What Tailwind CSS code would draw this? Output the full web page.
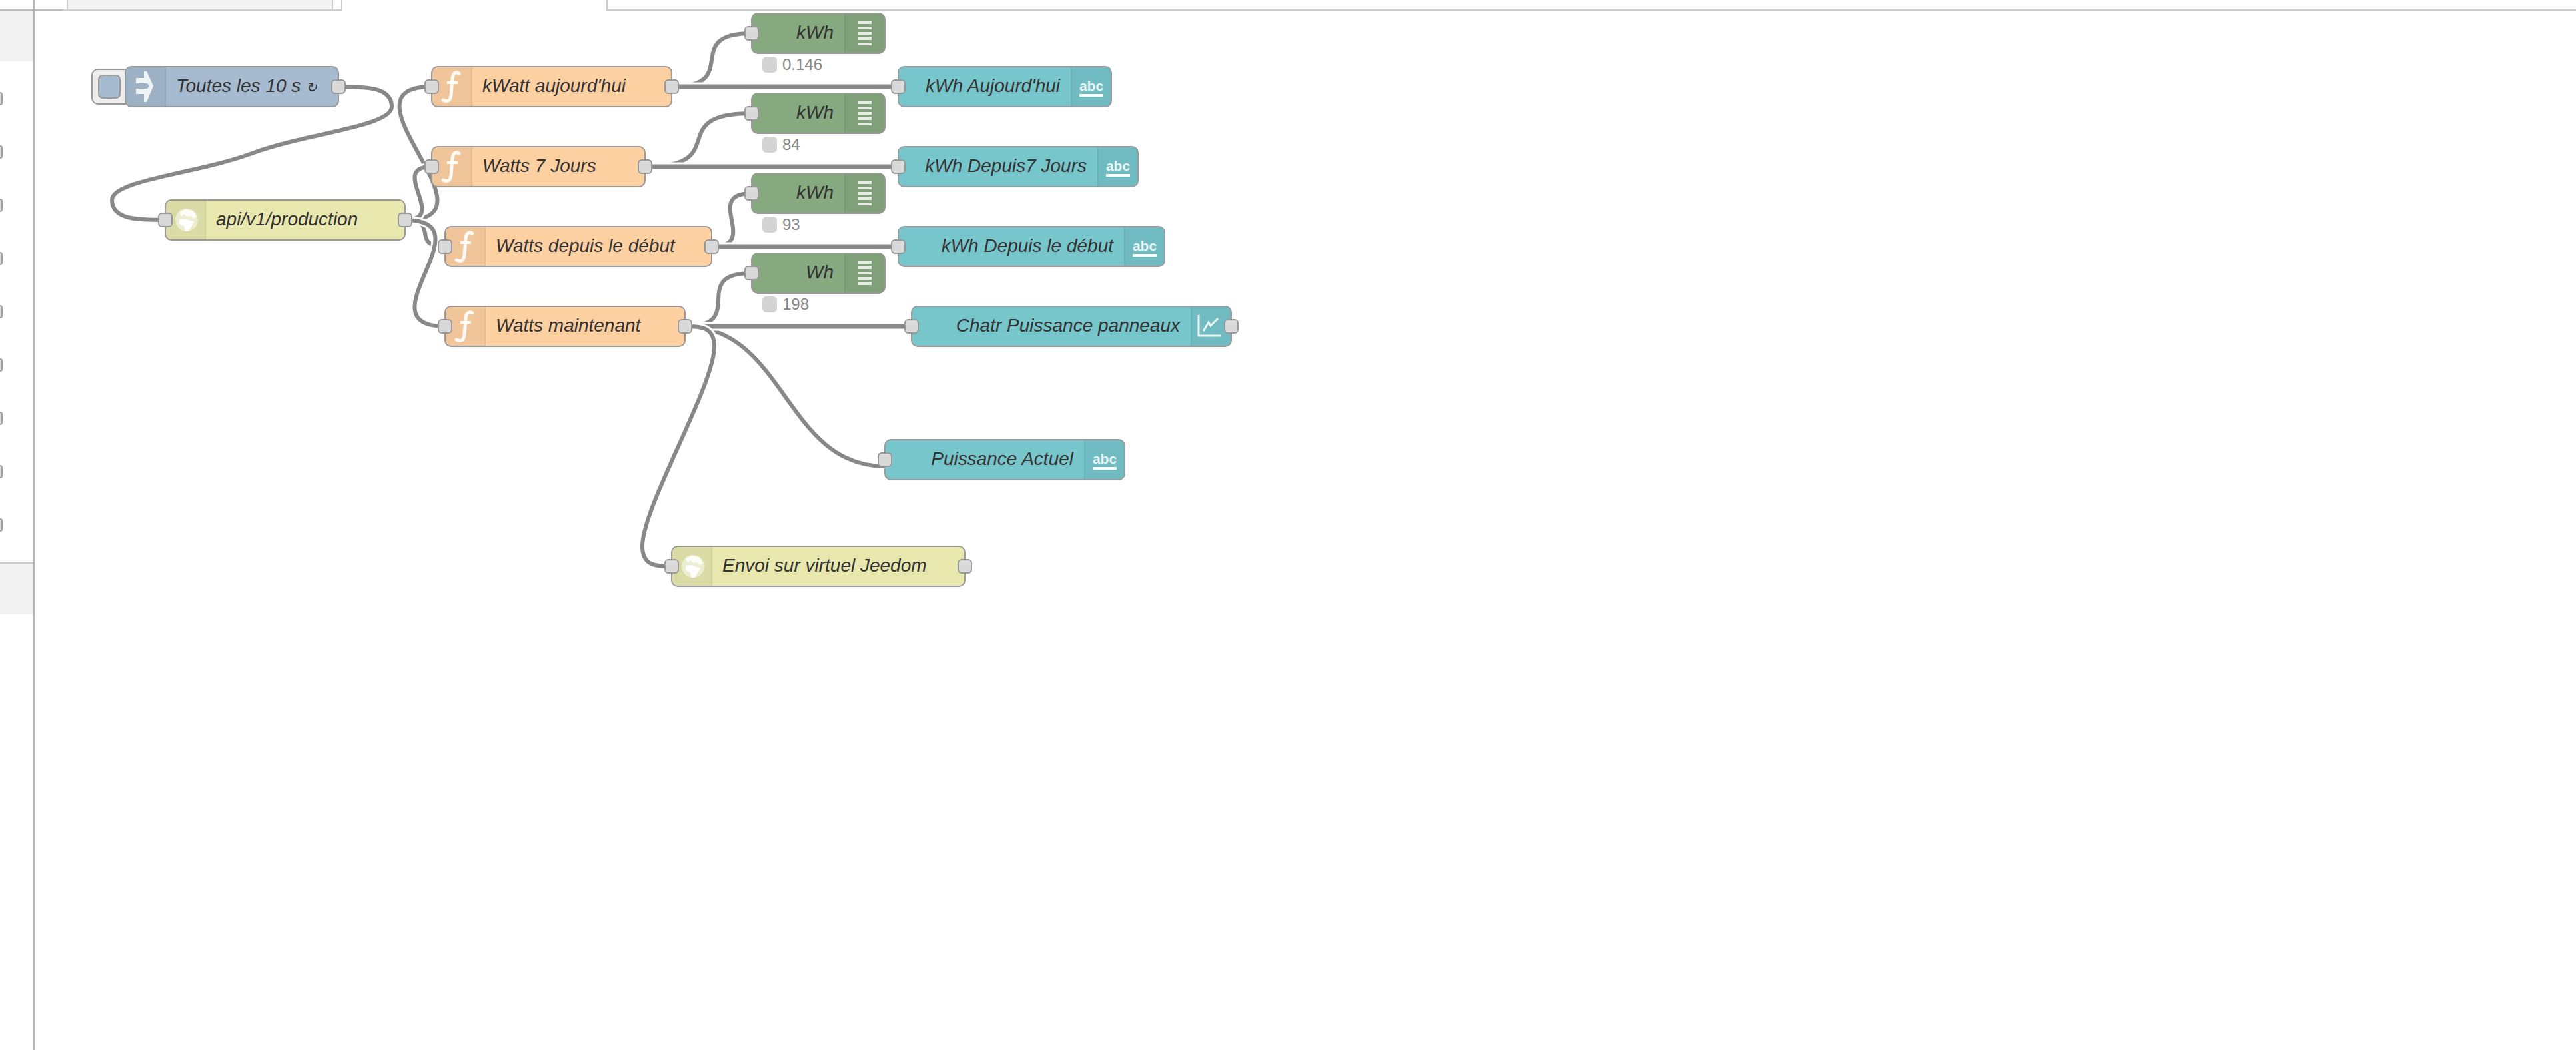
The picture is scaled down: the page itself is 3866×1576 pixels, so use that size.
<!DOCTYPE html>
<html lang="fr">
<head>
    <meta charset="UTF-8">
    <title>Node-RED - Flow</title>
    <script src="https://cdn.jsdelivr.net/npm/@tailwindcss/browser@4"></script>
</head>
<body class="bg-white">
<div class="relative flex w-[3866px] h-[1576px] overflow-hidden bg-white font-['Liberation_Sans',Arial,sans-serif]">

    <!-- palette -->
    <aside class="w-[52px] h-full shrink-0 border-r-2 border-[#b7b7b7]">
        <div class="h-4 border-b-2 border-[#bbbbbb]"></div>
        <div class="h-[76px] bg-[#f3f3f3]"></div>
        <div class="flex flex-col gap-[60px] mt-[46px]">
            <div class="w-[4px] h-[20px] border-2 border-l-0 border-[#a0a0a0] rounded-r-[4px] bg-[#d9d9d9]"></div>
            <div class="w-[4px] h-[20px] border-2 border-l-0 border-[#a0a0a0] rounded-r-[4px] bg-[#d9d9d9]"></div>
            <div class="w-[4px] h-[20px] border-2 border-l-0 border-[#a0a0a0] rounded-r-[4px] bg-[#d9d9d9]"></div>
            <div class="w-[4px] h-[20px] border-2 border-l-0 border-[#a0a0a0] rounded-r-[4px] bg-[#d9d9d9]"></div>
            <div class="w-[4px] h-[20px] border-2 border-l-0 border-[#a0a0a0] rounded-r-[4px] bg-[#d9d9d9]"></div>
            <div class="w-[4px] h-[20px] border-2 border-l-0 border-[#a0a0a0] rounded-r-[4px] bg-[#d9d9d9]"></div>
            <div class="w-[4px] h-[20px] border-2 border-l-0 border-[#a0a0a0] rounded-r-[4px] bg-[#d9d9d9]"></div>
            <div class="w-[4px] h-[20px] border-2 border-l-0 border-[#a0a0a0] rounded-r-[4px] bg-[#d9d9d9]"></div>
            <div class="w-[4px] h-[20px] border-2 border-l-0 border-[#a0a0a0] rounded-r-[4px] bg-[#d9d9d9]"></div>
        </div>
        <div class="h-[78px] mt-[46px] bg-[#f3f3f3] border-t-2 border-[#cccccc]"></div>
    </aside>

    <!-- workspace tabs -->
    <main class="flex-1 min-w-0">
        <div class="flex h-4">
            <div class="w-[42px] border-b-2 border-[#bbbbbb]"></div>
            <div class="w-[6px] border-b-2 border-[#cccccc]"></div>
            <div class="w-[400px] bg-[#f3f3f3] border-x-2 border-b-2 border-[#cccccc]"></div>
            <div class="w-[14px] border-r-2 border-b-2 border-[#cccccc]"></div>
            <div class="w-[396px]"></div>
            <div class="flex-1 border-l-2 border-b-2 border-[#cccccc]"></div>
        </div>
    </main>

    <!-- wires -->
    <svg class="absolute left-0 top-0" width="3866" height="1576" fill="none">
        <path stroke="#888888" stroke-width="6" d="M508 130 C548 130 588 130 588 160 C588 190 458 200 378 230 C298 260 168 270 168 300 C168 330 208 330 248 330"/>

        <path stroke="#ffffff" stroke-width="12" d="M608 330 C758 330 498 130 648 130"/>
        <path stroke="#888888" stroke-width="6" d="M608 330 C758 330 498 130 648 130"/>
        <path stroke="#ffffff" stroke-width="12" d="M608 330 C675 330 581 250 648 250"/>
        <path stroke="#888888" stroke-width="6" d="M608 330 C675 330 581 250 648 250"/>
        <path stroke="#ffffff" stroke-width="12" d="M608 330 C662 330 614 370 668 370"/>
        <path stroke="#888888" stroke-width="6" d="M608 330 C662 330 614 370 668 370"/>
        <path stroke="#ffffff" stroke-width="12" d="M608 330 C736 330 540 490 668 490"/>
        <path stroke="#888888" stroke-width="6" d="M608 330 C736 330 540 490 668 490"/>

        <path stroke="#888888" stroke-width="6" d="M1008 130 C1116 130 1020 50 1128 50"/>
        <path stroke="#ffffff" stroke-width="13" d="M1008 130 H1348"/>
        <path stroke="#888888" stroke-width="7" d="M1008 130 H1348"/>

        <path stroke="#888888" stroke-width="6" d="M968 250 C1102 250 994 170 1128 170"/>
        <path stroke="#ffffff" stroke-width="13" d="M968 250 H1348"/>
        <path stroke="#888888" stroke-width="7" d="M968 250 H1348"/>

        <path stroke="#888888" stroke-width="6" d="M1068 370 C1143 370 1053 290 1128 290"/>
        <path stroke="#ffffff" stroke-width="13" d="M1068 370 H1348"/>
        <path stroke="#888888" stroke-width="7" d="M1068 370 H1348"/>

        <path stroke="#888888" stroke-width="6" d="M1028 490 C1124 490 1032 410 1128 410"/>
        <path stroke="#888888" stroke-width="6" d="M1028 490 C1178 490 1178 700 1328 700"/>
        <path stroke="#ffffff" stroke-width="13" d="M1028 490 H1368"/>
        <path stroke="#888888" stroke-width="7" d="M1028 490 H1368"/>
        <path stroke="#ffffff" stroke-width="12" d="M1028 490 C1050 490 1072 490 1072 520 C1072 550 1045 610 1018 670 C991 730 964 790 964 820 C964 850 986 850 1008 850"/>
        <path stroke="#888888" stroke-width="6" d="M1028 490 C1050 490 1072 490 1072 520 C1072 550 1045 610 1018 670 C991 730 964 790 964 820 C964 850 986 850 1008 850"/>
    </svg>

    <!-- inject button -->
    <div class="absolute left-[137px] top-[103px] w-[60px] h-[54px] bg-[#eeeeee] border-2 border-[#999999] rounded-l-[10px] pl-[8px] pt-[7px]">
        <div class="w-[34px] h-[36px] bg-[#a6bbcf] border-2 border-[#999999] rounded-[7px]"></div>
    </div>

    <!-- inject -->
    <div class="absolute left-[187px] top-[99px] w-[322px] h-[62px] flex items-center bg-[#a6bbcf] border-2 border-[#999999] rounded-[10px] text-[28px] italic text-[#333333]">
        <div class="w-[60px] h-full shrink-0 bg-black/5 border-r-2 border-black/5 rounded-l-[8px]">
            <svg class="blur-[0.6px]" width="58" height="58" viewBox="0 0 58 58" fill="#ffffff" fill-opacity="0.85">
                <path d="M27 6 L31 6 L41 28 L31 52 L27 52 L27 40 L15 40 L15 32 L32 32 L35 28 L32 24 L15 24 L15 16 L27 16 Z"/>
            </svg>
        </div>
        <span class="pl-[15px] pb-[3px] whitespace-nowrap">Toutes les 10 s <span class="text-[20px]">↻</span></span>
        <div class="absolute right-[-12px] top-[18px] w-[22px] h-[22px] bg-[#d9d9d9] border-2 border-[#999999] rounded-[6px]"></div>
    </div>

    <!-- http request -->
    <div class="absolute left-[247px] top-[299px] w-[362px] h-[62px] flex items-center bg-[#e7e7ae] border-2 border-[#999999] rounded-[10px] text-[28px] italic text-[#333333]">
        <div class="w-[60px] h-full shrink-0 bg-black/5 border-r-2 border-black/5 rounded-l-[8px]">
            <svg class="blur-[0.6px]" width="58" height="58" viewBox="0 0 58 58" fill="#ffffff">
                <circle cx="31" cy="29" r="17" fill-opacity="0.5"/>
                <path d="M20 17 L30 13 L40 15 L46 24 L41 27 L37 23 L31 24 L27 20 L23 24 Z" fill-opacity="0.85"/>
                <path d="M20 28 L30 27 L36 30 L42 31 L38 39 L33 46 L29 46 L27 38 L20 35 Z"/>
            </svg>
        </div>
        <span class="pl-[15px] pb-[3px] whitespace-nowrap">api/v1/production</span>
        <div class="absolute left-[-12px] top-[18px] w-[22px] h-[22px] bg-[#d9d9d9] border-2 border-[#999999] rounded-[6px]"></div>
        <div class="absolute right-[-12px] top-[18px] w-[22px] h-[22px] bg-[#d9d9d9] border-2 border-[#999999] rounded-[6px]"></div>
    </div>

    <!-- functions -->
    <div class="absolute left-[647px] top-[99px] w-[362px] h-[62px] flex items-center bg-[#fdd0a2] border-2 border-[#999999] rounded-[10px] text-[28px] italic text-[#333333]">
        <div class="w-[60px] h-full shrink-0 bg-black/5 border-r-2 border-black/5 rounded-l-[8px]">
            <svg class="blur-[0.5px]" width="58" height="58" viewBox="0 0 58 58" fill="none" stroke="#ffffff" stroke-opacity="0.9">
                <path stroke-width="5" stroke-linecap="round" d="M40 9 C34 6 31 9 30 17 L28 42 C27 51 22 52 16 49"/>
                <path stroke-width="4" d="M22 23 H38"/>
            </svg>
        </div>
        <span class="pl-[15px] pb-[3px] whitespace-nowrap">kWatt aujourd'hui</span>
        <div class="absolute left-[-12px] top-[18px] w-[22px] h-[22px] bg-[#d9d9d9] border-2 border-[#999999] rounded-[6px]"></div>
        <div class="absolute right-[-12px] top-[18px] w-[22px] h-[22px] bg-[#d9d9d9] border-2 border-[#999999] rounded-[6px]"></div>
    </div>

    <div class="absolute left-[647px] top-[219px] w-[322px] h-[62px] flex items-center bg-[#fdd0a2] border-2 border-[#999999] rounded-[10px] text-[28px] italic text-[#333333]">
        <div class="w-[60px] h-full shrink-0 bg-black/5 border-r-2 border-black/5 rounded-l-[8px]">
            <svg class="blur-[0.5px]" width="58" height="58" viewBox="0 0 58 58" fill="none" stroke="#ffffff" stroke-opacity="0.9">
                <path stroke-width="5" stroke-linecap="round" d="M40 9 C34 6 31 9 30 17 L28 42 C27 51 22 52 16 49"/>
                <path stroke-width="4" d="M22 23 H38"/>
            </svg>
        </div>
        <span class="pl-[15px] pb-[3px] whitespace-nowrap">Watts 7 Jours</span>
        <div class="absolute left-[-12px] top-[18px] w-[22px] h-[22px] bg-[#d9d9d9] border-2 border-[#999999] rounded-[6px]"></div>
        <div class="absolute right-[-12px] top-[18px] w-[22px] h-[22px] bg-[#d9d9d9] border-2 border-[#999999] rounded-[6px]"></div>
    </div>

    <div class="absolute left-[667px] top-[339px] w-[402px] h-[62px] flex items-center bg-[#fdd0a2] border-2 border-[#999999] rounded-[10px] text-[28px] italic text-[#333333]">
        <div class="w-[60px] h-full shrink-0 bg-black/5 border-r-2 border-black/5 rounded-l-[8px]">
            <svg class="blur-[0.5px]" width="58" height="58" viewBox="0 0 58 58" fill="none" stroke="#ffffff" stroke-opacity="0.9">
                <path stroke-width="5" stroke-linecap="round" d="M40 9 C34 6 31 9 30 17 L28 42 C27 51 22 52 16 49"/>
                <path stroke-width="4" d="M22 23 H38"/>
            </svg>
        </div>
        <span class="pl-[15px] pb-[3px] whitespace-nowrap">Watts depuis le début</span>
        <div class="absolute left-[-12px] top-[18px] w-[22px] h-[22px] bg-[#d9d9d9] border-2 border-[#999999] rounded-[6px]"></div>
        <div class="absolute right-[-12px] top-[18px] w-[22px] h-[22px] bg-[#d9d9d9] border-2 border-[#999999] rounded-[6px]"></div>
    </div>

    <div class="absolute left-[667px] top-[459px] w-[362px] h-[62px] flex items-center bg-[#fdd0a2] border-2 border-[#999999] rounded-[10px] text-[28px] italic text-[#333333]">
        <div class="w-[60px] h-full shrink-0 bg-black/5 border-r-2 border-black/5 rounded-l-[8px]">
            <svg class="blur-[0.5px]" width="58" height="58" viewBox="0 0 58 58" fill="none" stroke="#ffffff" stroke-opacity="0.9">
                <path stroke-width="5" stroke-linecap="round" d="M40 9 C34 6 31 9 30 17 L28 42 C27 51 22 52 16 49"/>
                <path stroke-width="4" d="M22 23 H38"/>
            </svg>
        </div>
        <span class="pl-[15px] pb-[3px] whitespace-nowrap">Watts maintenant</span>
        <div class="absolute left-[-12px] top-[18px] w-[22px] h-[22px] bg-[#d9d9d9] border-2 border-[#999999] rounded-[6px]"></div>
        <div class="absolute right-[-12px] top-[18px] w-[22px] h-[22px] bg-[#d9d9d9] border-2 border-[#999999] rounded-[6px]"></div>
    </div>

    <!-- debug nodes -->
    <div class="absolute left-[1127px] top-[19px] w-[202px] h-[62px] flex items-center bg-[#87a980] border-2 border-[#999999] rounded-[10px] text-[28px] italic text-[#333333]">
        <span class="flex-1 text-right pr-[16px] pb-[3px] whitespace-nowrap">kWh</span>
        <div class="w-[60px] h-full shrink-0 flex flex-col items-center justify-center gap-[4px] bg-black/5 border-l-2 border-black/5 rounded-r-[8px]">
            <div class="w-5 h-[4px] bg-white/80"></div><div class="w-5 h-[4px] bg-white/80"></div><div class="w-5 h-[4px] bg-white/80"></div><div class="w-5 h-[4px] bg-white/80"></div><div class="w-5 h-[4px] bg-white/80"></div>
        </div>
        <div class="absolute left-[-12px] top-[18px] w-[22px] h-[22px] bg-[#d9d9d9] border-2 border-[#999999] rounded-[6px]"></div>
    </div>
    <div class="absolute left-[1144px] top-[85px] flex items-center gap-[8px] h-[24px] text-[24px] text-[#888888]">
        <div class="w-[22px] h-[24px] bg-[#d3d3d3] rounded-[6px]"></div><span>0.146</span>
    </div>

    <div class="absolute left-[1127px] top-[139px] w-[202px] h-[62px] flex items-center bg-[#87a980] border-2 border-[#999999] rounded-[10px] text-[28px] italic text-[#333333]">
        <span class="flex-1 text-right pr-[16px] pb-[3px] whitespace-nowrap">kWh</span>
        <div class="w-[60px] h-full shrink-0 flex flex-col items-center justify-center gap-[4px] bg-black/5 border-l-2 border-black/5 rounded-r-[8px]">
            <div class="w-5 h-[4px] bg-white/80"></div><div class="w-5 h-[4px] bg-white/80"></div><div class="w-5 h-[4px] bg-white/80"></div><div class="w-5 h-[4px] bg-white/80"></div><div class="w-5 h-[4px] bg-white/80"></div>
        </div>
        <div class="absolute left-[-12px] top-[18px] w-[22px] h-[22px] bg-[#d9d9d9] border-2 border-[#999999] rounded-[6px]"></div>
    </div>
    <div class="absolute left-[1144px] top-[205px] flex items-center gap-[8px] h-[24px] text-[24px] text-[#888888]">
        <div class="w-[22px] h-[24px] bg-[#d3d3d3] rounded-[6px]"></div><span>84</span>
    </div>

    <div class="absolute left-[1127px] top-[259px] w-[202px] h-[62px] flex items-center bg-[#87a980] border-2 border-[#999999] rounded-[10px] text-[28px] italic text-[#333333]">
        <span class="flex-1 text-right pr-[16px] pb-[3px] whitespace-nowrap">kWh</span>
        <div class="w-[60px] h-full shrink-0 flex flex-col items-center justify-center gap-[4px] bg-black/5 border-l-2 border-black/5 rounded-r-[8px]">
            <div class="w-5 h-[4px] bg-white/80"></div><div class="w-5 h-[4px] bg-white/80"></div><div class="w-5 h-[4px] bg-white/80"></div><div class="w-5 h-[4px] bg-white/80"></div><div class="w-5 h-[4px] bg-white/80"></div>
        </div>
        <div class="absolute left-[-12px] top-[18px] w-[22px] h-[22px] bg-[#d9d9d9] border-2 border-[#999999] rounded-[6px]"></div>
    </div>
    <div class="absolute left-[1144px] top-[325px] flex items-center gap-[8px] h-[24px] text-[24px] text-[#888888]">
        <div class="w-[22px] h-[24px] bg-[#d3d3d3] rounded-[6px]"></div><span>93</span>
    </div>

    <div class="absolute left-[1127px] top-[379px] w-[202px] h-[62px] flex items-center bg-[#87a980] border-2 border-[#999999] rounded-[10px] text-[28px] italic text-[#333333]">
        <span class="flex-1 text-right pr-[16px] pb-[3px] whitespace-nowrap">Wh</span>
        <div class="w-[60px] h-full shrink-0 flex flex-col items-center justify-center gap-[4px] bg-black/5 border-l-2 border-black/5 rounded-r-[8px]">
            <div class="w-5 h-[4px] bg-white/80"></div><div class="w-5 h-[4px] bg-white/80"></div><div class="w-5 h-[4px] bg-white/80"></div><div class="w-5 h-[4px] bg-white/80"></div><div class="w-5 h-[4px] bg-white/80"></div>
        </div>
        <div class="absolute left-[-12px] top-[18px] w-[22px] h-[22px] bg-[#d9d9d9] border-2 border-[#999999] rounded-[6px]"></div>
    </div>
    <div class="absolute left-[1144px] top-[445px] flex items-center gap-[8px] h-[24px] text-[24px] text-[#888888]">
        <div class="w-[22px] h-[24px] bg-[#d3d3d3] rounded-[6px]"></div><span>198</span>
    </div>

    <!-- dashboard text nodes -->
    <div class="absolute left-[1347px] top-[99px] w-[322px] h-[62px] flex items-center bg-[#77c6cc] border-2 border-[#999999] rounded-[10px] text-[28px] italic text-[#333333]">
        <span class="flex-1 text-right pr-[16px] pb-[3px] whitespace-nowrap">kWh Aujourd'hui</span>
        <div class="w-[60px] h-full shrink-0 flex flex-col items-center justify-center pt-[4px] bg-black/5 border-l-2 border-black/5 rounded-r-[8px] text-white/85 not-italic font-bold text-[21px] leading-[20px]">
            <span>abc</span><div class="w-[36px] h-[4px] mt-[2px] bg-white/95"></div>
        </div>
        <div class="absolute left-[-12px] top-[18px] w-[22px] h-[22px] bg-[#d9d9d9] border-2 border-[#999999] rounded-[6px]"></div>
    </div>

    <div class="absolute left-[1347px] top-[219px] w-[362px] h-[62px] flex items-center bg-[#77c6cc] border-2 border-[#999999] rounded-[10px] text-[28px] italic text-[#333333]">
        <span class="flex-1 text-right pr-[16px] pb-[3px] whitespace-nowrap">kWh Depuis7 Jours</span>
        <div class="w-[60px] h-full shrink-0 flex flex-col items-center justify-center pt-[4px] bg-black/5 border-l-2 border-black/5 rounded-r-[8px] text-white/85 not-italic font-bold text-[21px] leading-[20px]">
            <span>abc</span><div class="w-[36px] h-[4px] mt-[2px] bg-white/95"></div>
        </div>
        <div class="absolute left-[-12px] top-[18px] w-[22px] h-[22px] bg-[#d9d9d9] border-2 border-[#999999] rounded-[6px]"></div>
    </div>

    <div class="absolute left-[1347px] top-[339px] w-[402px] h-[62px] flex items-center bg-[#77c6cc] border-2 border-[#999999] rounded-[10px] text-[28px] italic text-[#333333]">
        <span class="flex-1 text-right pr-[16px] pb-[3px] whitespace-nowrap">kWh Depuis le début</span>
        <div class="w-[60px] h-full shrink-0 flex flex-col items-center justify-center pt-[4px] bg-black/5 border-l-2 border-black/5 rounded-r-[8px] text-white/85 not-italic font-bold text-[21px] leading-[20px]">
            <span>abc</span><div class="w-[36px] h-[4px] mt-[2px] bg-white/95"></div>
        </div>
        <div class="absolute left-[-12px] top-[18px] w-[22px] h-[22px] bg-[#d9d9d9] border-2 border-[#999999] rounded-[6px]"></div>
    </div>

    <div class="absolute left-[1367px] top-[459px] w-[482px] h-[62px] flex items-center bg-[#77c6cc] border-2 border-[#999999] rounded-[10px] text-[28px] italic text-[#333333]">
        <span class="flex-1 text-right pr-[16px] pb-[3px] whitespace-nowrap">Chatr Puissance panneaux</span>
        <div class="w-[60px] h-full shrink-0 bg-black/5 border-l-2 border-black/5 rounded-r-[8px]">
            <svg class="blur-[0.4px]" width="58" height="58" viewBox="0 0 58 58" fill="none" stroke="#ffffff" stroke-opacity="0.85" stroke-width="3">
                <path d="M10 12 V43 H43"/>
                <path d="M17 36 L25 23 L28 28 L39 17"/>
            </svg>
        </div>
        <div class="absolute left-[-12px] top-[18px] w-[22px] h-[22px] bg-[#d9d9d9] border-2 border-[#999999] rounded-[6px]"></div>
        <div class="absolute right-[-12px] top-[18px] w-[22px] h-[22px] bg-[#d9d9d9] border-2 border-[#999999] rounded-[6px]"></div>
    </div>

    <div class="absolute left-[1327px] top-[659px] w-[362px] h-[62px] flex items-center bg-[#77c6cc] border-2 border-[#999999] rounded-[10px] text-[28px] italic text-[#333333]">
        <span class="flex-1 text-right pr-[16px] pb-[3px] whitespace-nowrap">Puissance Actuel</span>
        <div class="w-[60px] h-full shrink-0 flex flex-col items-center justify-center pt-[4px] bg-black/5 border-l-2 border-black/5 rounded-r-[8px] text-white/85 not-italic font-bold text-[21px] leading-[20px]">
            <span>abc</span><div class="w-[36px] h-[4px] mt-[2px] bg-white/95"></div>
        </div>
        <div class="absolute left-[-12px] top-[18px] w-[22px] h-[22px] bg-[#d9d9d9] border-2 border-[#999999] rounded-[6px]"></div>
    </div>

    <!-- http request jeedom -->
    <div class="absolute left-[1007px] top-[819px] w-[442px] h-[62px] flex items-center bg-[#e7e7ae] border-2 border-[#999999] rounded-[10px] text-[28px] italic text-[#333333]">
        <div class="w-[60px] h-full shrink-0 bg-black/5 border-r-2 border-black/5 rounded-l-[8px]">
            <svg class="blur-[0.6px]" width="58" height="58" viewBox="0 0 58 58" fill="#ffffff">
                <circle cx="31" cy="29" r="17" fill-opacity="0.5"/>
                <path d="M20 17 L30 13 L40 15 L46 24 L41 27 L37 23 L31 24 L27 20 L23 24 Z" fill-opacity="0.85"/>
                <path d="M20 28 L30 27 L36 30 L42 31 L38 39 L33 46 L29 46 L27 38 L20 35 Z"/>
            </svg>
        </div>
        <span class="pl-[15px] pb-[3px] whitespace-nowrap">Envoi sur virtuel Jeedom</span>
        <div class="absolute left-[-12px] top-[18px] w-[22px] h-[22px] bg-[#d9d9d9] border-2 border-[#999999] rounded-[6px]"></div>
        <div class="absolute right-[-12px] top-[18px] w-[22px] h-[22px] bg-[#d9d9d9] border-2 border-[#999999] rounded-[6px]"></div>
    </div>

</div>
</body>
</html>
